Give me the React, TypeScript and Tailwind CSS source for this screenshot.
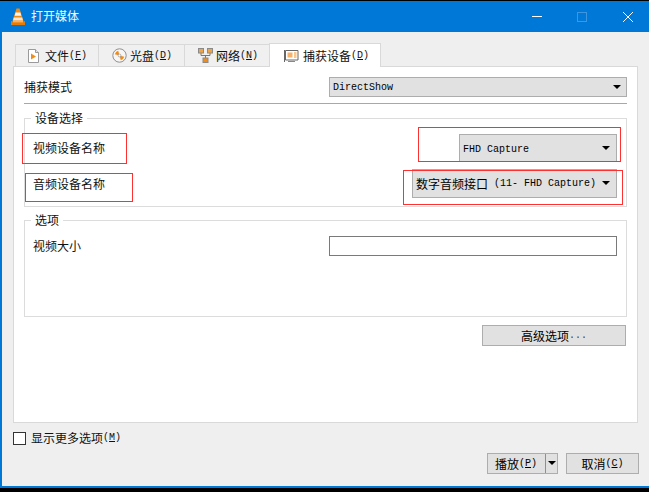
import React from 'react';

const cjk = "whitespace-nowrap font-['Noto_Sans_CJK_SC','Liberation_Sans',sans-serif] text-[12px] leading-[14px]";
const mono = "whitespace-pre font-['Liberation_Mono',monospace] text-[10px] leading-[14px]";

function Arrow() {
  return (
    <svg width="8" height="4" viewBox="0 0 8 4" className="mb-px shrink-0">
      <path d="M0 0H8L4 4Z" fill="#000" />
    </svg>
  );
}

function Hotkey({ k }: { k: string }) {
  return (
    <span className={mono}>
      (<u>{k}</u>)
    </span>
  );
}

function VlcIcon() {
  return (
    <svg width="16" height="18" viewBox="0 0 16 18">
      <path d="M6.5 0.5H9.5L13.5 13H2.5Z" fill="#f08a12" />
      <path d="M5.6 4.5H10.4L11.3 7.8H4.6Z" fill="#f4f4f4" />
      <path d="M3.8 9.6H12.2L13 12.4H3Z" fill="#f6f6f6" opacity="0.85" />
      <path d="M1 13.2H15V17H1Z" fill="#e87a08" />
      <path d="M3 13H13V14.4H3Z" fill="#ffb14d" />
    </svg>
  );
}

function FileIcon() {
  return (
    <svg width="13" height="14" viewBox="0 0 13 14">
      <path d="M1.5 0.5H8.5L11.5 3.5V13.5H1.5Z" fill="#fff" stroke="#9a9a9a" />
      <path d="M8.5 0.5V3.5H11.5" fill="#e6e6e6" stroke="#9a9a9a" />
      <path d="M4 4.5L9 7.5L4 10.5Z" fill="#f28c16" />
    </svg>
  );
}

function DiscIcon() {
  return (
    <svg width="15" height="15" viewBox="0 0 15 15">
      <circle cx="7.5" cy="7.5" r="6.7" fill="#f6f6f6" stroke="#8e8e8e" />
      <path d="M7.5 7.5L2.8 6.2A5 5 0 0 1 6.2 2.8Z" fill="#f28c16" />
      <path d="M7.5 7.5L12.2 8.8A5 5 0 0 1 8.8 12.2Z" fill="#f28c16" />
      <circle cx="7.5" cy="7.5" r="1.4" fill="#fff" stroke="#8e8e8e" strokeWidth="0.7" />
    </svg>
  );
}

function NetworkIcon() {
  return (
    <svg width="15" height="15" viewBox="0 0 15 15">
      <path d="M3 5V7.5H12V5M7.5 7.5V10" fill="none" stroke="#777" />
      <rect x="0.5" y="0.5" width="5" height="4.5" fill="#f2a33c" stroke="#8a8a8a" />
      <rect x="9.5" y="0.5" width="5" height="4.5" fill="#f2a33c" stroke="#8a8a8a" />
      <rect x="5" y="10" width="5" height="4.5" fill="#f28c16" stroke="#8a8a8a" />
    </svg>
  );
}

function CaptureIcon() {
  return (
    <svg width="15" height="14" viewBox="0 0 15 14">
      <path d="M1.5 1.5H14V11H1.5Z" fill="#fff" stroke="#666" />
      <path d="M0.5 1V13" stroke="#666" />
      <rect x="3.5" y="3.5" width="5" height="5" fill="#f5b169" />
      <path d="M10 4H12.5M10 6H12.5M10 8H12.5" stroke="#f28c16" />
      <path d="M4 12.5H11" stroke="#888" />
    </svg>
  );
}

function Tab({ icon, label, k, iconPad, width }: { icon: React.ReactNode; label: string; k: string; iconPad: string; width: string }) {
  return (
    <div className={`flex h-[22px] items-center border border-b-0 border-[#d9d9d9] bg-[#f0f0f0] -ml-px first:ml-0 ${width} ${iconPad}`}>
      <div className="flex w-[18px] shrink-0 items-center">{icon}</div>
      <span className={cjk}>{label}</span>
      <Hotkey k={k} />
    </div>
  );
}

function GrayBox({ className, children }: { className: string; children: React.ReactNode }) {
  return <div className={`flex items-center border border-[#adadad] bg-[#e1e1e1] text-black ${className}`}>{children}</div>;
}

function Group({ title, className, children }: { title: string; className: string; children: React.ReactNode }) {
  return (
    <div className={`relative border border-[#dcdcdc] pl-[8px] pr-[9px] ${className}`}>
      <span className={`absolute -top-[8px] left-[6px] bg-white px-[4px] text-[#111] ${cjk}`}>{title}</span>
      {children}
    </div>
  );
}

function Mark({ className }: { className: string }) {
  return <div className={`pointer-events-none absolute border border-[#ff3030] ${className}`} />;
}

export default function App() {
  return (
    <div className="relative flex h-[492px] w-[649px] flex-col overflow-hidden bg-black pt-px pb-[4px] text-[#111]">
      <div className="flex h-[31px] shrink-0 items-center bg-[#0078d7] pl-[10px] pr-[16px] text-white">
        <VlcIcon />
        <span className={`ml-[5px] pb-px ${cjk} text-[#f4f8fc]`}>打开媒体</span>
        <div className="ml-auto flex items-center">
          <div className="h-px w-[10px] bg-white" />
          <div className="ml-[35px] h-[10px] w-[10px] border border-[#3d97e0]" />
          <svg width="10" height="10" viewBox="0 0 10 10" className="ml-[36px]">
            <path d="M0 0L10 10M10 0L0 10" stroke="#fff" strokeWidth="1" />
          </svg>
        </div>
      </div>

      <div className="flex flex-1 flex-col border-b-2 border-l-2 border-[#0078d7] bg-[#efefef] pl-[11px] pr-[10px]">
        <div className="ml-[2px] mt-[11px] flex h-[23px] items-end">
          <Tab icon={<FileIcon />} label="文件" k="F" iconPad="pl-[11px]" width="w-[84px]" />
          <Tab icon={<DiscIcon />} label="光盘" k="D" iconPad="pl-[13px]" width="w-[87px]" />
          <Tab icon={<NetworkIcon />} label="网络" k="N" iconPad="pl-[13px]" width="w-[86px]" />
          <div className="relative z-10 -mb-px -ml-px flex h-[24px] w-[112px] items-center border border-b-0 border-[#d9d9d9] bg-white pl-[14px]">
            <div className="flex w-[19px] shrink-0 items-center">
              <CaptureIcon />
            </div>
            <span className={cjk}>捕获设备</span>
            <Hotkey k="D" />
          </div>
        </div>

        <div className="flex h-[357px] w-[625px] shrink-0 flex-col border border-[#d9d9d9] bg-white pl-[10px] pr-[10px] pt-[10px]">
          <div className="flex h-[20px] items-center justify-between">
            <span className={cjk}>捕获模式</span>
            <GrayBox className="h-[20px] w-[298px] pl-[3px] pr-[5px]">
              <span className={`pt-px ${mono}`}>DirectShow</span>
              <span className="ml-auto">
                <Arrow />
              </span>
            </GrayBox>
          </div>
          <div className="mt-[6px] h-px bg-[#a8a8a8]" />

          <Group title="设备选择" className="mt-[14px] h-[89px] pt-[15px]">
            <div className="flex h-[28px] items-center justify-between">
              <span className={cjk}>视频设备名称</span>
              <GrayBox className="h-[28px] w-[158px] pl-[3px] pr-[6px]">
                <span className={`pt-[3px] ${mono}`}>FHD Capture</span>
                <span className="ml-auto">
                  <Arrow />
                </span>
              </GrayBox>
            </div>
            <div className="mt-[7px] flex h-[29px] items-center justify-between">
              <span className={`pb-[1px] pt-[2px] ${cjk}`}>音频设备名称</span>
              <GrayBox className="h-[29px] w-[205px] pl-[3px] pr-[6px]">
                <span className={cjk}>数字音频接口</span>
                <span className={`ml-[6px] pt-px ${mono}`}>(11- FHD Capture)</span>
                <span className="ml-auto">
                  <Arrow />
                </span>
              </GrayBox>
            </div>
          </Group>

          <Group title="选项" className="mt-[13px] h-[97px] pt-[15px]">
            <div className="flex h-[20px] items-center justify-between">
              <span className={cjk}>视频大小</span>
              <div className="h-[20px] w-[288px] border border-[#7a7a7a] bg-white" />
            </div>
          </Group>

          <div className="mt-[8px] flex justify-end">
            <GrayBox className="mr-px h-[21px] w-[144px] justify-center">
              <span className={cjk}>高级选项</span>
              <span className={`${mono} text-[#444]`}>...</span>
            </GrayBox>
          </div>
        </div>

        <div className="mt-[8px] flex h-[14px] items-center">
          <div className="h-[13px] w-[13px] border border-[#333] bg-white" />
          <span className={`ml-[5px] ${cjk}`}>显示更多选项</span>
          <Hotkey k="M" />
        </div>

        <div className="mt-[8px] flex justify-end gap-[8px]">
          <GrayBox className="h-[21px] w-[71px] pl-[7px]">
            <span className={cjk}>播放</span>
            <Hotkey k="P" />
            <div className="ml-[8px] h-[19px] w-px shrink-0 bg-[#8f8f8f]" />
            <span className="ml-[2px]">
              <Arrow />
            </span>
          </GrayBox>
          <GrayBox className="h-[21px] w-[73px] justify-center">
            <span className={cjk}>取消</span>
            <Hotkey k="C" />
          </GrayBox>
        </div>
      </div>

      <Mark className="left-[22px] top-[133px] h-[31px] w-[105px]" />
      <Mark className="left-[25px] top-[173px] h-[29px] w-[108px]" />
      <Mark className="left-[418px] top-[127px] h-[35px] w-[203px]" />
      <Mark className="left-[403px] top-[170px] h-[35px] w-[220px]" />
    </div>
  );
}
